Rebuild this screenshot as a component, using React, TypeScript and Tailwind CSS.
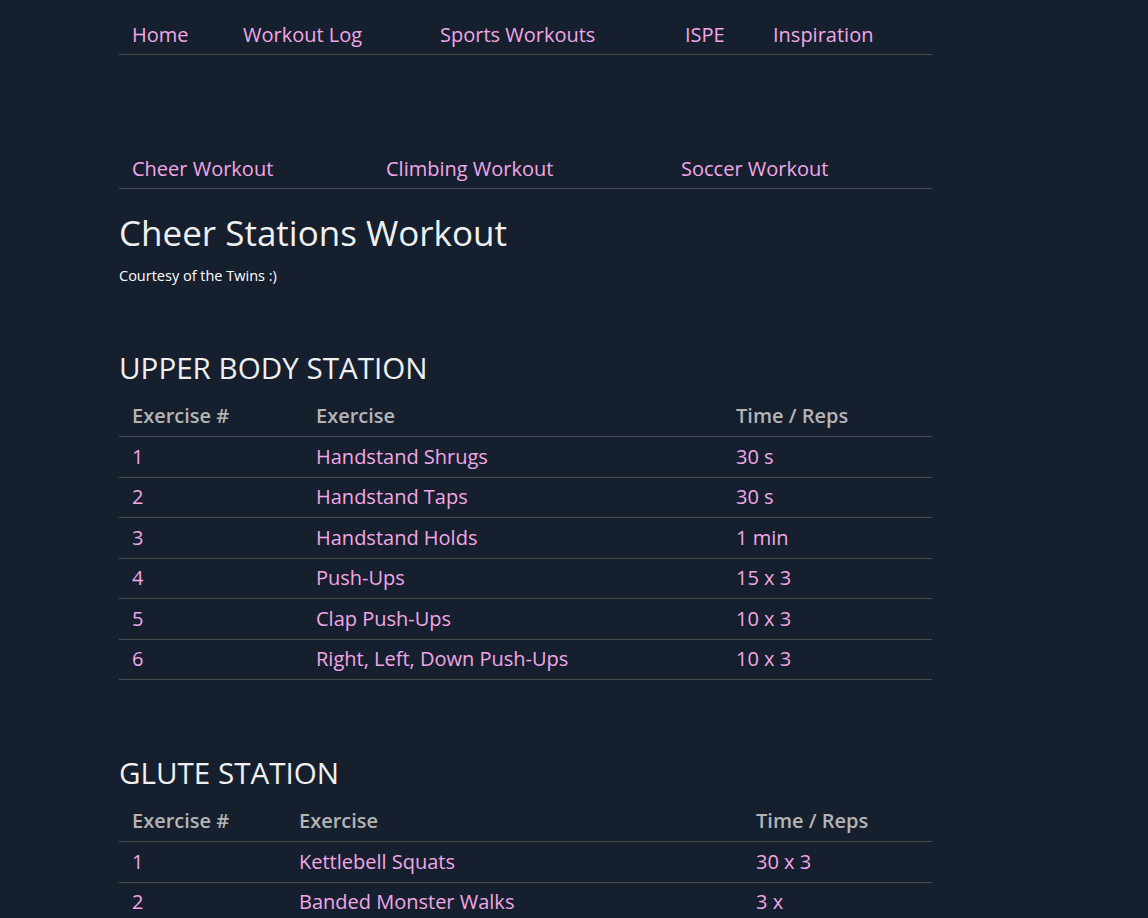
import React from 'react';

const mainLinks = [
  { label: 'Home', w: 'w-[111px]' },
  { label: 'Workout Log', w: 'w-[197px]' },
  { label: 'Sports Workouts', w: 'w-[245px]' },
  { label: 'ISPE', w: 'w-[88px]' },
  { label: 'Inspiration', w: 'flex-1' },
];

const sportLinks = [
  { label: 'Cheer Workout', w: 'w-[254px]' },
  { label: 'Climbing Workout', w: 'w-[295px]' },
  { label: 'Soccer Workout', w: 'flex-1' },
];

const stations = [
  {
    title: 'UPPER BODY STATION',
    cols: ['w-[184px]', 'w-[420px]', ''],
    rows: [
      ['1', 'Handstand Shrugs', '30 s'],
      ['2', 'Handstand Taps', '30 s'],
      ['3', 'Handstand Holds', '1 min'],
      ['4', 'Push-Ups', '15 x 3'],
      ['5', 'Clap Push-Ups', '10 x 3'],
      ['6', 'Right, Left, Down Push-Ups', '10 x 3'],
    ],
  },
  {
    title: 'GLUTE STATION',
    cols: ['w-[167px]', 'w-[457px]', ''],
    rows: [
      ['1', 'Kettlebell Squats', '30 x 3'],
      ['2', 'Banded Monster Walks', '3 x'],
      ['3', 'Donkey Kicks', '15 x 3'],
    ],
  },
];

function NavRow({ links }: { links: { label: string; w: string }[] }) {
  return (
    <div className="flex border-b border-[#4a4a4a]">
      {links.map((l) => (
        <a
          key={l.label}
          href="#"
          className={`${l.w} px-[13px] pt-[6px] pb-[4px] leading-[30px] text-[20px] text-[#f2a7e6]`}
        >
          {l.label}
        </a>
      ))}
    </div>
  );
}

export default function App() {
  return (
    <div className="min-h-screen bg-[#151f2e] font-['Open_Sans',sans-serif] overflow-hidden">
      <div className="ml-[119px] w-[813px] pt-[14px]">
        <NavRow links={mainLinks} />
        <div className="mt-[93px]">
          <NavRow links={sportLinks} />
        </div>

        <h1 className="mt-[22px] text-[35px] leading-[43px] text-[#f0f0f0]">Cheer Stations Workout</h1>
        <p className="mt-[11px] text-[14.5px] leading-[21px] text-white">Courtesy of the Twins :)</p>

        {stations.map((s, i) => (
          <section key={s.title} className={i === 0 ? 'mt-[64px]' : 'mt-[75px]'}>
            <h2 className="text-[29.6px] leading-[36px] text-[#f0f0f0]">{s.title}</h2>
            <table className="mt-[10px] w-full border-collapse text-[20px] leading-[30px]">
              <thead>
                <tr className="border-b border-[#4a4a4a]">
                  {['Exercise #', 'Exercise', 'Time / Reps'].map((h, j) => (
                    <th
                      key={h}
                      className={`${s.cols[j]} px-[13px] py-[5px] text-left font-semibold text-[#b4b4b4]`}
                    >
                      {h}
                    </th>
                  ))}
                </tr>
              </thead>
              <tbody>
                {s.rows.map((r) => (
                  <tr key={r[0]} className="border-b border-[#4a4a4a]">
                    {r.map((c, j) => (
                      <td key={j} className="px-[13px] py-[4.75px] text-[#f2a7e6]">
                        {c}
                      </td>
                    ))}
                  </tr>
                ))}
              </tbody>
            </table>
          </section>
        ))}
      </div>
    </div>
  );
}
